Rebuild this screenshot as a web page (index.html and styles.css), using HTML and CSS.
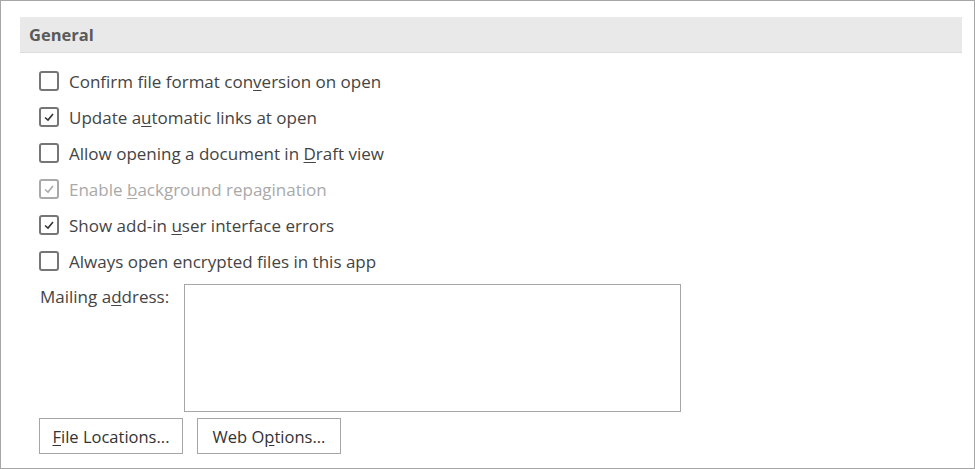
FILE: index.html
```html
<!DOCTYPE html>
<html lang="en">
<head>
    <meta charset="UTF-8">
    <title>Options - Advanced - General</title>
    <link rel="stylesheet" href="styles.css">
</head>
<body>
    <div class="panel">
        <div class="section-header">General</div>

        <div class="options">
            <label class="option">
                <span class="box"></span>
                <span>Confirm file format con<u>v</u>ersion on open</span>
            </label>
            <label class="option">
                <span class="box checked"><svg viewBox="0 0 16 16"><polyline points="4,8.5 7,11 12,5"/></svg></span>
                <span>Update a<u>u</u>tomatic links at open</span>
            </label>
            <label class="option">
                <span class="box"></span>
                <span>Allow opening a document in <u>D</u>raft view</span>
            </label>
            <label class="option disabled">
                <span class="box checked"><svg viewBox="0 0 16 16"><polyline points="4,8.5 7,11 12,5"/></svg></span>
                <span>Enable <u>b</u>ackground repagination</span>
            </label>
            <label class="option">
                <span class="box checked"><svg viewBox="0 0 16 16"><polyline points="4,8.5 7,11 12,5"/></svg></span>
                <span>Show add-in <u>u</u>ser interface errors</span>
            </label>
            <label class="option">
                <span class="box"></span>
                <span>Always open encrypted files in this app</span>
            </label>
        </div>

        <div class="mailing">
            <span class="mailing-label">Mailing a<u>d</u>dress:</span>
            <div class="mailing-box"></div>
        </div>

        <div class="actions">
            <button class="btn"><u>F</u>ile Locations...</button>
            <button class="btn">Web O<u>p</u>tions...</button>
        </div>
    </div>
</body>
</html>
```

FILE: styles.css
```css
body {
    margin: 0;
    background-color: #ffffff;
    font-family: "Open Sans", "Noto Sans", sans-serif;
    color: #444444;
}
.panel {
    box-sizing: border-box;
    width: 975px;
    height: 469px;
    border: 1px solid #a6a6a6;
    padding: 16px 12px 0 19px;
}
.section-header {
    height: 36px;
    line-height: 36px;
    box-sizing: border-box;
    background-color: #e9e9e9;
    border-bottom: 1px solid #dcdcdc;
    padding-left: 9px;
    font-size: 16.5px;
    font-weight: bold;
    color: #5a5a5a;
}
.options {
    display: flex;
    flex-direction: column;
    padding: 10px 0 0 19px;
}
.option {
    display: flex;
    align-items: center;
    gap: 10px;
    height: 36px;
    font-size: 17px;
}
.option u, .mailing u, .btn u {
    text-underline-offset: 2px;
}
.box {
    box-sizing: border-box;
    width: 20px;
    height: 20px;
    border: 2px solid #767676;
    border-radius: 3px;
    display: flex;
    align-items: center;
    justify-content: center;
    flex: none;
}
.box svg {
    width: 16px;
    height: 16px;
    fill: none;
    stroke: #333333;
    stroke-width: 1.6;
}
.option.disabled {
    color: #a9a9a9;
}
.option.disabled .box {
    border-color: #a9a9a9;
}
.option.disabled .box svg {
    stroke: #a9a9a9;
}
.mailing {
    display: flex;
    margin: 5px 0 0 20px;
}
.mailing-label {
    width: 144px;
    font-size: 17px;
    padding-top: 1px;
}
.mailing-box {
    width: 497px;
    height: 128px;
    box-sizing: border-box;
    border: 1px solid #a6a6a6;
}
.actions {
    display: flex;
    gap: 14px;
    margin: 6px 0 0 19px;
}
.btn {
    box-sizing: border-box;
    width: 144px;
    height: 36px;
    background-color: #ffffff;
    border: 1px solid #a6a6a6;
    font-family: inherit;
    font-size: 16.5px;
    color: #333333;
    padding: 0;
}
```
